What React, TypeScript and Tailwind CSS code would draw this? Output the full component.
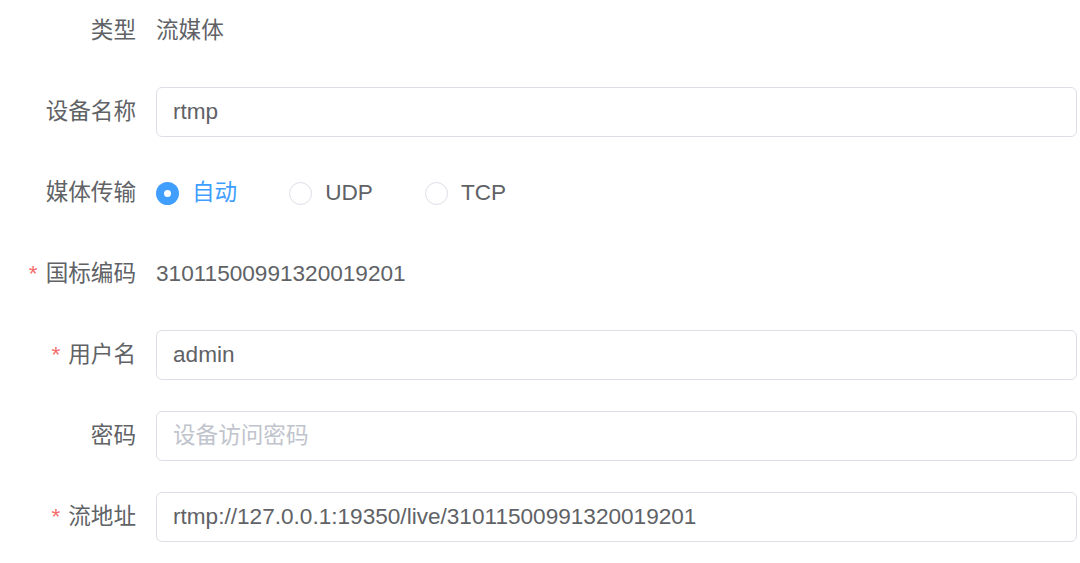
import * as React from "react"

type Row = {
  label: string
  required?: boolean
  children: React.ReactNode
}

function FormRow({ label, required, children }: Row) {
  return (
    <div className="flex items-center h-[50px] mb-[31px] last:mb-0">
      <label className="w-[136px] shrink-0 text-right text-[22.6px] text-[#606266] leading-none">
        {required && <span className="text-[#f56c6c] mr-[8px]">*</span>}
        {label}
      </label>
      <div className="flex-1 ml-[20px] flex items-center">{children}</div>
    </div>
  )
}

function TextInput({ value, placeholder }: { value?: string; placeholder?: string }) {
  return (
    <input
      readOnly
      value={value ?? ""}
      placeholder={placeholder}
      className="w-full h-[50px] rounded-[6px] border-[1.5px] border-[#dcdfe6] bg-white pl-[16px] pr-4 text-[22.6px] text-[#606266] placeholder:text-[#c0c4cc] outline-none"
    />
  )
}

function Radio({ label, checked }: { label: string; checked?: boolean }) {
  return (
    <span className="flex items-center mr-[52px]">
      {checked ? (
        <span className="w-[23px] h-[23px] rounded-full bg-[#409eff] flex items-center justify-center">
          <span className="w-[7px] h-[7px] rounded-full bg-white" />
        </span>
      ) : (
        <span className="w-[23px] h-[23px] rounded-full border-[1.5px] border-[#dcdfe6] bg-white" />
      )}
      <span
        className={`ml-[13px] text-[22.6px] leading-none ${
          checked ? "text-[#409eff]" : "text-[#606266]"
        }`}
      >
        {label}
      </span>
    </span>
  )
}

export default function App() {
  const [transport] = React.useState("auto")

  return (
    <div className="min-h-screen bg-white pt-[6px] pr-[3px] font-['Liberation_Sans','Noto_Sans_CJK_SC',sans-serif]">
      <FormRow label="类型">
        <span className="text-[22.6px] text-[#606266]">流媒体</span>
      </FormRow>

      <FormRow label="设备名称">
        <TextInput value="rtmp" />
      </FormRow>

      <FormRow label="媒体传输">
        <Radio label="自动" checked={transport === "auto"} />
        <Radio label="UDP" checked={transport === "udp"} />
        <Radio label="TCP" checked={transport === "tcp"} />
      </FormRow>

      <FormRow label="国标编码" required>
        <span className="text-[22.6px] text-[#606266]">31011500991320019201</span>
      </FormRow>

      <FormRow label="用户名" required>
        <TextInput value="admin" />
      </FormRow>

      <FormRow label="密码">
        <TextInput placeholder="设备访问密码" />
      </FormRow>

      <FormRow label="流地址" required>
        <TextInput value="rtmp://127.0.0.1:19350/live/31011500991320019201" />
      </FormRow>
    </div>
  )
}
